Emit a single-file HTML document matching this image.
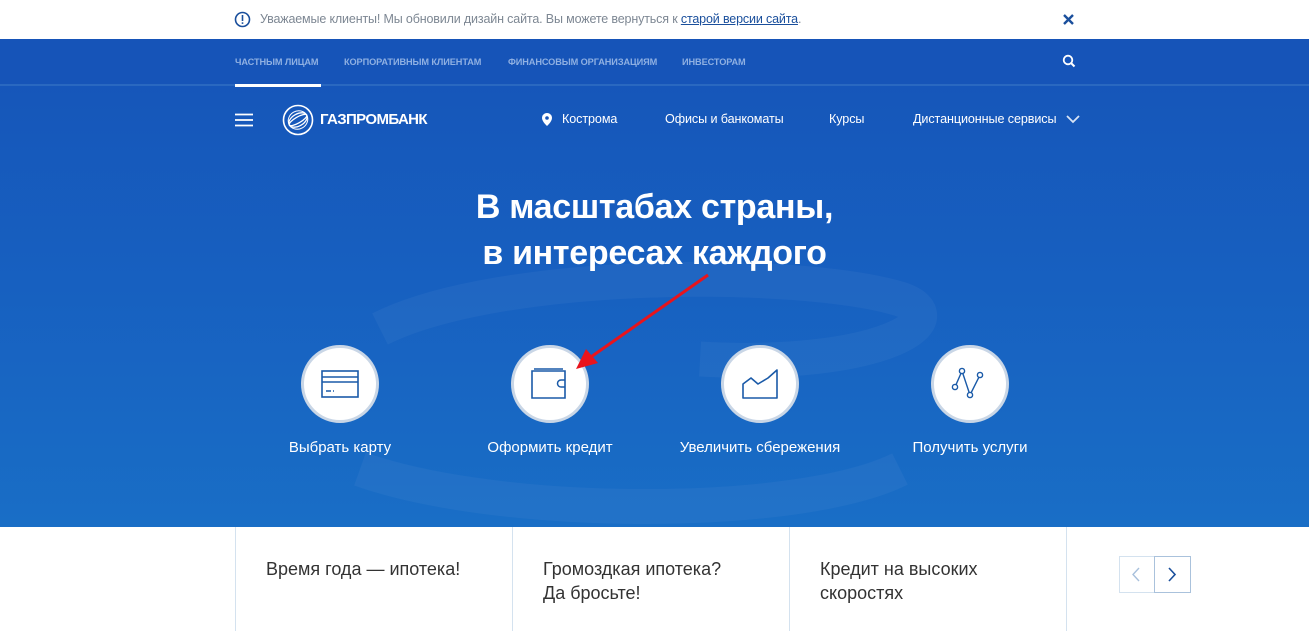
<!DOCTYPE html>
<html><head><meta charset="utf-8"><style>
*{margin:0;padding:0;box-sizing:border-box}
body{width:1309px;height:631px;overflow:hidden;font-family:"Liberation Sans",sans-serif;background:#fff;position:relative}
.note{height:39px;background:#fff;position:relative}
.note .t{position:absolute;left:260px;top:12px;font-size:12.5px;color:#7d8793;letter-spacing:-0.15px}
.note .t a{color:#1a4f9c;text-decoration:underline}
.hero{position:absolute;left:0;top:39px;width:1309px;height:488px;background:linear-gradient(180deg,#1654b8 0%,#1760c0 50%,#196ec6 100%);overflow:hidden}
.nav{position:absolute;top:0;left:0;width:100%;height:47px;background:#1654b8;border-bottom:2px solid #2a68c0}
.nav span{position:absolute;top:18px;font-size:9.2px;font-weight:bold;color:#8fb0e2;letter-spacing:-0.1px}
.w{color:#fff}
.tx{position:absolute;color:#fff;font-size:12.6px;letter-spacing:-0.1px}
.h1{position:absolute;left:0;width:1309px;top:145px;text-align:center;color:#fff;font-size:34px;font-weight:bold;line-height:46px;letter-spacing:-0.3px}
.c{position:absolute;top:306px;width:78px;height:78px;border-radius:50%;background:#fff;border:3px solid #c9d6e6;display:flex;align-items:center;justify-content:center}
.lb{position:absolute;top:400px;color:#fff;font-size:15px;width:200px;text-align:center}
.card{position:absolute;top:527px;height:104px;border-left:1px solid #d4e2ef;font-size:18px;color:#333;padding:30px 0 0 30px;line-height:24px}
</style></head><body>
<div class="note">
<svg style="position:absolute;left:234px;top:11px" width="17" height="17"><circle cx="8.5" cy="8.5" r="7" fill="none" stroke="#1a4f9c" stroke-width="1.6"/><rect x="7.7" y="4" width="1.6" height="6" fill="#1a4f9c"/><rect x="7.7" y="11.3" width="1.6" height="1.6" fill="#1a4f9c"/></svg>
<div class="t">Уважаемые клиенты! Мы обновили дизайн сайта. Вы можете вернуться к <a>старой версии сайта</a>.</div>
<svg style="position:absolute;left:1063px;top:14px" width="11" height="11"><path d="M1 1L10 10M10 1L1 10" stroke="#1a4f9c" stroke-width="2.4"/></svg>
</div>
<div class="hero">
<svg style="position:absolute;left:0;top:0" width="1309" height="488"><path d="M380 290 C 500 230, 800 230, 900 260 C 960 280, 880 330, 700 320" fill="none" stroke="rgba(255,255,255,0.04)" stroke-width="35"/><path d="M360 430 C 500 480, 800 480, 900 430" fill="none" stroke="rgba(255,255,255,0.04)" stroke-width="35"/></svg>
<div class="nav">
<span class="w" style="left:235px">ЧАСТНЫМ ЛИЦАМ</span>
<span style="left:344px">КОРПОРАТИВНЫМ КЛИЕНТАМ</span>
<span style="left:508px">ФИНАНСОВЫМ ОРГАНИЗАЦИЯМ</span>
<span style="left:682px">ИНВЕСТОРАМ</span>
<div style="position:absolute;left:235px;top:45px;width:86px;height:3px;background:#fff"></div>
<svg style="position:absolute;left:1062px;top:15px" width="14" height="14"><circle cx="6" cy="6" r="4.3" fill="none" stroke="#fff" stroke-width="1.8"/><path d="M9 9L12.5 12.5" stroke="#fff" stroke-width="2"/></svg>
</div>
<svg style="position:absolute;left:235px;top:74px" width="18" height="14"><path d="M0 1.5H18M0 7H18M0 12.5H18" stroke="#fff" stroke-width="1.8"/></svg>
<svg style="position:absolute;left:282px;top:65px" width="32" height="32"><circle cx="16" cy="16" r="14.5" fill="none" stroke="#fff" stroke-width="1.6"/><ellipse cx="16" cy="16" rx="10" ry="6" fill="none" stroke="#fff" stroke-width="1.3" transform="rotate(-30 16 16)"/><ellipse cx="16" cy="16" rx="10" ry="3" fill="none" stroke="#fff" stroke-width="1.3" transform="rotate(-30 16 16)"/><ellipse cx="16" cy="16" rx="10" ry="9" fill="none" stroke="#fff" stroke-width="1" transform="rotate(-30 16 16)"/></svg>
<div class="tx" style="left:320px;top:72px;font-size:15px;font-weight:bold;letter-spacing:-0.6px">ГАЗПРОМБАНК</div>
<svg style="position:absolute;left:542px;top:74px" width="10" height="13"><path d="M5 0C2.2 0 0 2.2 0 5c0 3.5 5 8 5 8s5-4.5 5-8c0-2.8-2.2-5-5-5z" fill="#fff"/><circle cx="5" cy="5" r="1.8" fill="#1654b8"/></svg>
<div class="tx" style="left:562px;top:73px">Кострома</div>
<div class="tx" style="left:665px;top:73px">Офисы и банкоматы</div>
<div class="tx" style="left:829px;top:73px">Курсы</div>
<div class="tx" style="left:913px;top:73px">Дистанционные сервисы</div>
<svg style="position:absolute;left:1066px;top:76px" width="14" height="9"><path d="M1 1L7 7L13 1" fill="none" stroke="#d8e4f5" stroke-width="1.8"/></svg>
<div class="h1">В масштабах страны,<br>в интересах каждого</div>
<div class="c" style="left:301px"><svg width="40" height="30"><rect x="2" y="2" width="36" height="26" fill="none" stroke="#1a5aa8" stroke-width="1.6"/><path d="M2 8H38M2 13H38" stroke="#1a5aa8" stroke-width="1.6"/><path d="M6 22H11M13 22H14" stroke="#1a5aa8" stroke-width="1.4"/></svg></div>
<div class="c" style="left:511px"><svg width="40" height="34"><path d="M2 4H35V31H2Z" fill="none" stroke="#1a5aa8" stroke-width="1.6"/><path d="M4 2H33" stroke="#1a5aa8" stroke-width="1.4"/><path d="M35 13H31A3 3 0 0 0 31 20H35" fill="none" stroke="#1a5aa8" stroke-width="1.5"/></svg></div>
<div class="c" style="left:721px"><svg width="40" height="32"><path d="M3 30V16L11 10L18 16L28 10L37 2V30Z" fill="none" stroke="#1a5aa8" stroke-width="1.6" stroke-linejoin="round"/></svg></div>
<div class="c" style="left:931px"><svg width="40" height="34"><path d="M5 20L12 4L20 28L30 8" fill="none" stroke="#1a5aa8" stroke-width="1.4"/><circle cx="5" cy="20" r="2.6" fill="#fff" stroke="#1a5aa8" stroke-width="1.4"/><circle cx="12" cy="4" r="2.6" fill="#fff" stroke="#1a5aa8" stroke-width="1.4"/><circle cx="20" cy="28" r="2.6" fill="#fff" stroke="#1a5aa8" stroke-width="1.4"/><circle cx="30" cy="8" r="2.6" fill="#fff" stroke="#1a5aa8" stroke-width="1.4"/></svg></div>
<div class="lb" style="left:240px">Выбрать карту</div>
<div class="lb" style="left:450px">Оформить кредит</div>
<div class="lb" style="left:660px">Увеличить сбережения</div>
<div class="lb" style="left:870px">Получить услуги</div>
<svg style="position:absolute;left:0;top:0" width="1309" height="488"><path d="M708 236L588 320" stroke="#e8141c" stroke-width="3"/><path d="M576 330L586 310L598 324Z" fill="#e8141c"/></svg>
</div>
<div class="card" style="left:235px;width:277px">Время года — ипотека!</div>
<div class="card" style="left:512px;width:278px">Громоздкая ипотека?<br>Да бросьте!</div>
<div class="card" style="left:789px;width:278px">Кредит на высоких<br>скоростях</div>
<div class="card" style="left:1066px;width:1px;padding:0"></div>
<div style="position:absolute;left:1119px;top:556px;width:72px;height:37px;border:1px solid #d4e2ef;background:#fff"></div>
<div style="position:absolute;left:1154px;top:556px;width:37px;height:37px;border:1px solid #aac2dc;background:#fff"></div>
<svg style="position:absolute;left:1131px;top:567px" width="10" height="15"><path d="M8 1L2 7.5L8 14" fill="none" stroke="#a8c0dc" stroke-width="1.4"/></svg>
<svg style="position:absolute;left:1167px;top:567px" width="10" height="15"><path d="M2 1L8 7.5L2 14" fill="none" stroke="#1a4f9c" stroke-width="1.6"/></svg>
</body></html>
